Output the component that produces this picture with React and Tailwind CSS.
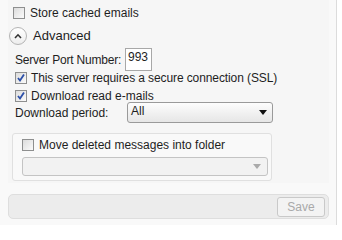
import React from 'react'

const Check = ({ checked }) => (
  <span className="w-[12px] h-[12px] shrink-0 border border-[#8e8f8f] bg-gradient-to-br from-[#dcdcdc] to-[#fbfbfb] flex items-center justify-center">
    {checked && (
      <svg width="10" height="10" viewBox="0 0 10 10">
        <path d="M2 5 L4 7.5 L8 1.5" fill="none" stroke="#2b4fa8" strokeWidth="1.8" />
      </svg>
    )}
  </span>
)

const Caret = ({ color = '#111' }) => (
  <svg width="8" height="5" viewBox="0 0 8 5">
    <path d="M0 0 H8 L4 5 Z" fill={color} />
  </svg>
)

const App = () => {
  return (
    <div
      className="w-[342px] h-[225px] bg-white flex text-[12px] text-[#1e1e1e] overflow-hidden whitespace-nowrap"
      style={{ fontFamily: '"Liberation Sans", Arial, sans-serif' }}
    >
      <div className="w-[337px] shrink-0 bg-[#f9f9f9] border-r border-[#dcdcdc] flex flex-col">
        <div className="ml-[8px] w-[321px] h-[183px] bg-[#f6f6f6] flex flex-col">
          <label className="flex items-center gap-[5px] ml-[5px] mt-[6px] h-[13px]">
            <Check />
            <span>Store cached emails</span>
          </label>

          <div className="flex items-center gap-[6px] ml-[1px] mt-[8px] h-[18px]">
            <span className="w-[18px] h-[18px] rounded-full border border-[#b4b4b4] bg-gradient-to-b from-white to-[#ededed] flex items-center justify-center">
              <svg width="8" height="6" viewBox="0 0 8 6">
                <path d="M1 5 L4 1.8 L7 5" fill="none" stroke="#333" strokeWidth="1.6" />
              </svg>
            </span>
            <span className="text-[13px]">Advanced</span>
          </div>

          <div className="flex items-center ml-[7px] mt-[3px] h-[23px]">
            <span className="w-[110px] shrink-0 tracking-[-0.2px]">Server Port Number:</span>
            <span className="w-[27px] h-[23px] shrink-0 border border-[#a8a8a8] bg-white px-[2px] leading-[16px]">993</span>
          </div>

          <label className="flex items-center gap-[4px] ml-[7px] mt-[0px] h-[13px]">
            <Check checked />
            <span className="tracking-[-0.1px]">This server requires a secure connection (SSL)</span>
          </label>

          <label className="flex items-center gap-[4px] ml-[7px] mt-[5px] h-[13px]">
            <Check checked />
            <span>Download read e-mails</span>
          </label>

          <div className="flex items-center ml-[7px] mt-[0px] h-[21px]">
            <span className="w-[112px] shrink-0">Download period:</span>
            <div className="w-[146px] h-[21px] shrink-0 rounded-[3px] border border-[#9a9a9a] bg-gradient-to-b from-[#fdfdfd] to-[#e6e6e6] flex items-center justify-between pl-[3px] pr-[5px]">
              <span className="leading-none -mt-[4px]">All</span>
              <Caret />
            </div>
          </div>

          <div className="ml-[4px] mt-[10px] w-[260px] h-[48px] rounded-[3px] border border-[#e0e0e0] bg-[#f9f9f9] flex flex-col px-[9px]">
            <label className="flex items-center gap-[5px] mt-[4px] h-[13px]">
              <Check />
              <span>Move deleted messages into folder</span>
            </label>
            <div className="mt-[6px] w-[246px] h-[19px] rounded-[3px] border border-[#c4c4c4] bg-[#f2f2f2] flex items-center justify-end pr-[6px]">
              <Caret color="#aaa" />
            </div>
          </div>
        </div>

        <div className="ml-[8px] mt-[11px] w-[321px] h-[25px] rounded-[5px] border border-[#dedede] bg-[#ececec] flex items-center justify-end pr-[3px]">
          <button className="w-[48px] h-[20px] rounded-[3px] border border-[#c9c9c9] bg-[#f3f3f3] text-[12px] text-[#a9a9a9]">
            Save
          </button>
        </div>
      </div>
    </div>
  )
}

export default App
